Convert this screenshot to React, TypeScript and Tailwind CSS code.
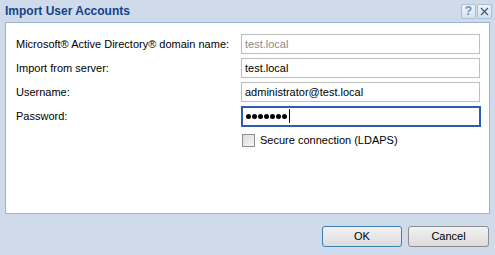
import React from 'react'

const font = { fontFamily: '"Liberation Sans", Arial, sans-serif' }

function Field({ label, children }: { label: string; children: React.ReactNode }) {
  return (
    <div className="flex h-[20px] items-center">
      <span className="w-[225px] shrink-0 whitespace-nowrap text-[11px] text-black">{label}</span>
      {children}
    </div>
  )
}

function TextBox({ value, disabled = false }: { value: string; disabled?: boolean }) {
  return (
    <div
      className={`flex h-[20px] w-[239px] items-center border border-[#bcbcbc] bg-white px-[3px] text-[11px] ${
        disabled ? 'text-[#8a8a8a]' : 'text-black'
      }`}
    >
      {value}
    </div>
  )
}

function ToolButton({ children }: { children: React.ReactNode }) {
  return (
    <div className="flex h-[15px] w-[15px] items-center justify-center rounded-[2px] border border-[#a9bfd6] bg-gradient-to-b from-[#eef3f9] to-[#d6e2ef]">
      {children}
    </div>
  )
}

export default function App() {
  return (
    <div className="flex h-[255px] w-[495px] flex-col bg-[#cfdbea]" style={font}>
      <div className="flex h-[22px] items-center justify-between pl-[5px] pr-[3px]">
        <span className="text-[12px] font-bold text-[#15428b]">Import User Accounts</span>
        <div className="flex gap-[1px]">
          <ToolButton>
            <span className="text-[12px] font-bold leading-none text-[#6b8fc0]">?</span>
          </ToolButton>
          <ToolButton>
            <svg width="11" height="11" viewBox="0 0 11 11">
              <path d="M2 2 L9 9 M9 2 L2 9" stroke="#3b5a82" strokeWidth="1.2" />
            </svg>
          </ToolButton>
        </div>
      </div>

      <div className="mx-[5px] h-[192px] border border-[#99b4d4] bg-white pl-[10px] pt-[11px]">
        <div className="flex flex-col gap-[4px]">
          <Field label="Microsoft® Active Directory® domain name:">
            <TextBox value="test.local" disabled />
          </Field>
          <Field label="Import from server:">
            <TextBox value="test.local" />
          </Field>
          <Field label="Username:">
            <TextBox value="administrator@test.local" />
          </Field>
          <Field label="Password:">
            <div className="flex h-[21px] w-[240px] items-center gap-[1px] border-2 border-[#2a5db0] bg-white px-[3px]">
              {[0, 1, 2, 3, 4, 5, 6].map((i) => (
                <span key={i} className="h-[5px] w-[5px] rounded-full bg-black" />
              ))}
              <span className="ml-[1px] h-[14px] w-[1px] bg-black" />
            </div>
          </Field>
          <div className="flex h-[20px] items-center pl-[226px]">
            <div className="h-[13px] w-[13px] border border-[#8f8f8f] bg-gradient-to-br from-[#dcdcdc] to-[#f6f6f6]" />
            <span className="ml-[5px] text-[11px] text-black">Secure connection (LDAPS)</span>
          </div>
        </div>
      </div>

      <div className="flex justify-end gap-[6px] pr-[6px] pt-[12px]">
        <button className="h-[21px] w-[80px] rounded-[3px] border border-[#3c7fb1] bg-gradient-to-b from-[#f2f2f2] to-[#dcdcdc] text-[11px] text-black">
          OK
        </button>
        <button className="h-[21px] w-[81px] rounded-[3px] border border-[#8d8d8d] bg-gradient-to-b from-[#f2f2f2] to-[#dcdcdc] text-[11px] text-black">
          Cancel
        </button>
      </div>
    </div>
  )
}
